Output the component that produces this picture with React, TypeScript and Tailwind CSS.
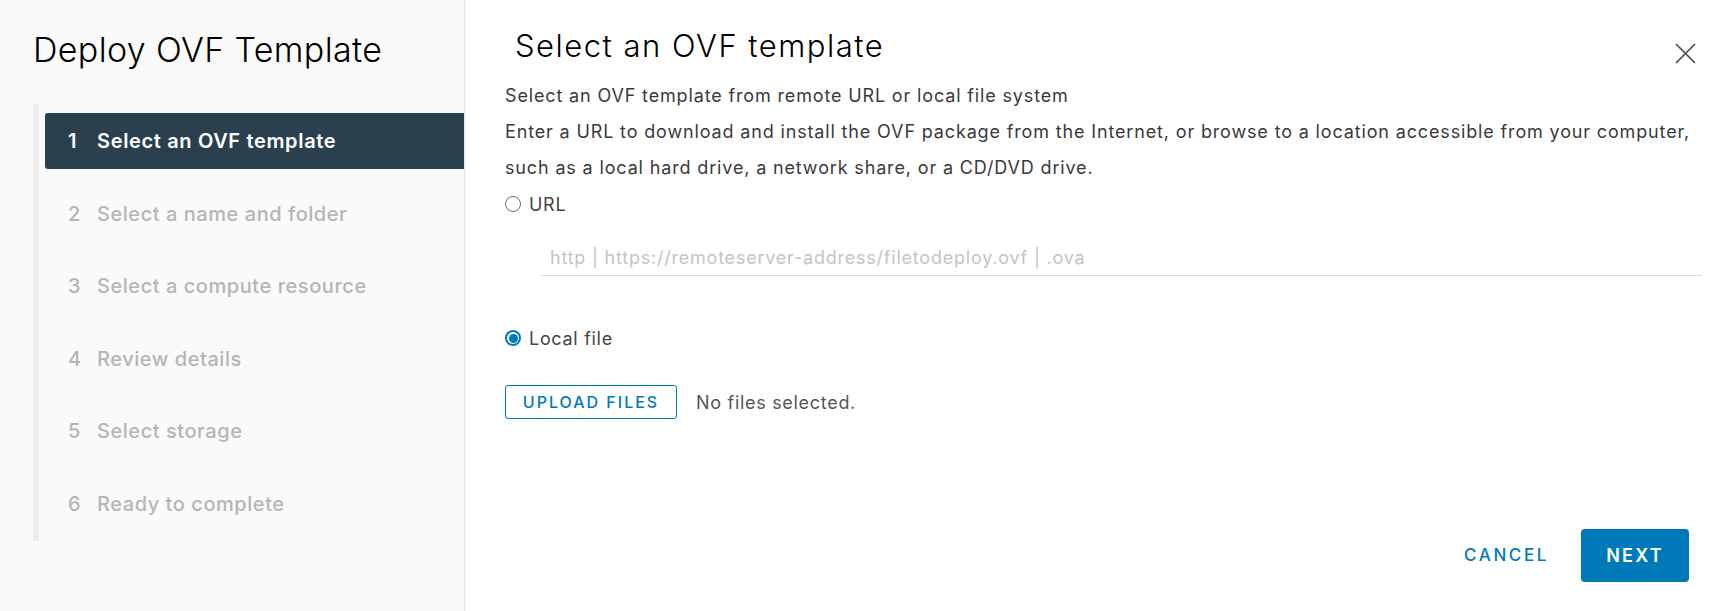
const steps = [
  'Select an OVF template',
  'Select a name and folder',
  'Select a compute resource',
  'Review details',
  'Select storage',
  'Ready to complete',
];

function Sidebar() {
  return (
    <aside className="w-[465px] shrink-0 h-full bg-[#fafafa] border-r border-[#e3e3e3] flex flex-col">
      <h1 className="pl-[33px] pt-[28px] text-[34px] leading-[44px] font-light text-black tracking-[0.35px]">
        Deploy OVF Template
      </h1>
      <nav className="ml-[33px] mt-[32px] border-l-[6px] border-[#ececec] pl-[6px] py-[9px] flex flex-col gap-[16.5px]">
        {steps.map((label, i) =>
          i === 0 ? (
            <div
              key={label}
              className="h-[56px] flex items-center pl-[23px] bg-[#2a404f] rounded-l-[3px] text-white text-[20px] font-semibold tracking-[0.65px]"
            >
              <span className="w-[29px]">{i + 1}</span>
              <span>{label}</span>
            </div>
          ) : (
            <div
              key={label}
              className="h-[56px] flex items-center pl-[23px] text-[#b5b5b5] text-[20px] font-medium tracking-[0.55px]"
            >
              <span className="w-[29px]">{i + 1}</span>
              <span>{label}</span>
            </div>
          )
        )}
      </nav>
    </aside>
  );
}

function Radio({ checked }: { checked?: boolean }) {
  return checked ? (
    <span className="w-[16px] h-[16px] rounded-full bg-[#0079b8] flex items-center justify-center shrink-0">
      <span className="w-[12px] h-[12px] rounded-full bg-white flex items-center justify-center">
        <span className="w-[9px] h-[9px] rounded-full bg-[#0079b8]" />
      </span>
    </span>
  ) : (
    <span className="w-[16px] h-[16px] rounded-full border-[1.5px] border-[#6b6b6b] bg-white shrink-0" />
  );
}

function Main() {
  return (
    <main className="flex-1 h-full bg-white flex flex-col pl-[40px] pr-[20px]">
      <div className="flex items-start justify-between pt-[26px]">
        <h2 className="ml-[10px] text-[31px] leading-[40px] font-light text-black tracking-[1.5px]">
          Select an OVF template
        </h2>
        <button className="mt-[17px] mr-[6px] text-[#4a4a4a]">
          <svg width="21" height="21" viewBox="0 0 21 21" fill="none" stroke="currentColor" strokeWidth="1.7">
            <path d="M1 1L20 20M20 1L1 20" />
          </svg>
        </button>
      </div>

      <div className="mt-[12px] text-[18px] leading-[36px] text-[#3a3a3a] tracking-[0.85px] whitespace-nowrap">
        <p>Select an OVF template from remote URL or local file system</p>
        <p>
          Enter a URL to download and install the OVF package from the Internet, or browse to a location accessible from your computer,
          <br />
          such as a local hard drive, a network share, or a CD/DVD drive.
        </p>
      </div>

      <label className="flex items-center gap-[8px] h-[36px] text-[18px] text-[#454545] tracking-[0.7px]">
        <Radio />
        <span>URL</span>
      </label>

      <div className="ml-[36px] mt-[17px] h-[37px] border-b border-[#dcdcdc] flex items-center pl-[9px] text-[18px] text-[#c4c4c4] tracking-[0.78px]">
        http | https://remoteserver-address/filetodeploy.ovf | .ova
      </div>

      <label className="mt-[44px] flex items-center gap-[8px] h-[36px] text-[18px] text-[#454545] tracking-[0.7px]">
        <Radio checked />
        <span>Local file</span>
      </label>

      <div className="mt-[29px] flex items-center gap-[19px]">
        <button className="h-[34px] w-[172px] border border-[#0079b8] rounded-[3px] text-[#0079b8] text-[16px] font-medium tracking-[2px]">
          UPLOAD FILES
        </button>
        <span className="text-[18px] text-[#565656] tracking-[0.7px]">No files selected.</span>
      </div>

      <div className="mt-auto pb-[29px] pr-[13px] flex items-center justify-end gap-[12px]">
        <button className="h-[53px] px-[20px] text-[#0079b8] text-[17px] font-medium tracking-[2.6px]">CANCEL</button>
        <button className="h-[53px] w-[108px] rounded-[4px] bg-[#0079b8] text-white text-[18px] font-semibold tracking-[2.2px]">
          NEXT
        </button>
      </div>
    </main>
  );
}

export default function App() {
  return (
    <div className="h-screen w-full flex font-['Inter',sans-serif] overflow-hidden">
      <Sidebar />
      <Main />
    </div>
  );
}
